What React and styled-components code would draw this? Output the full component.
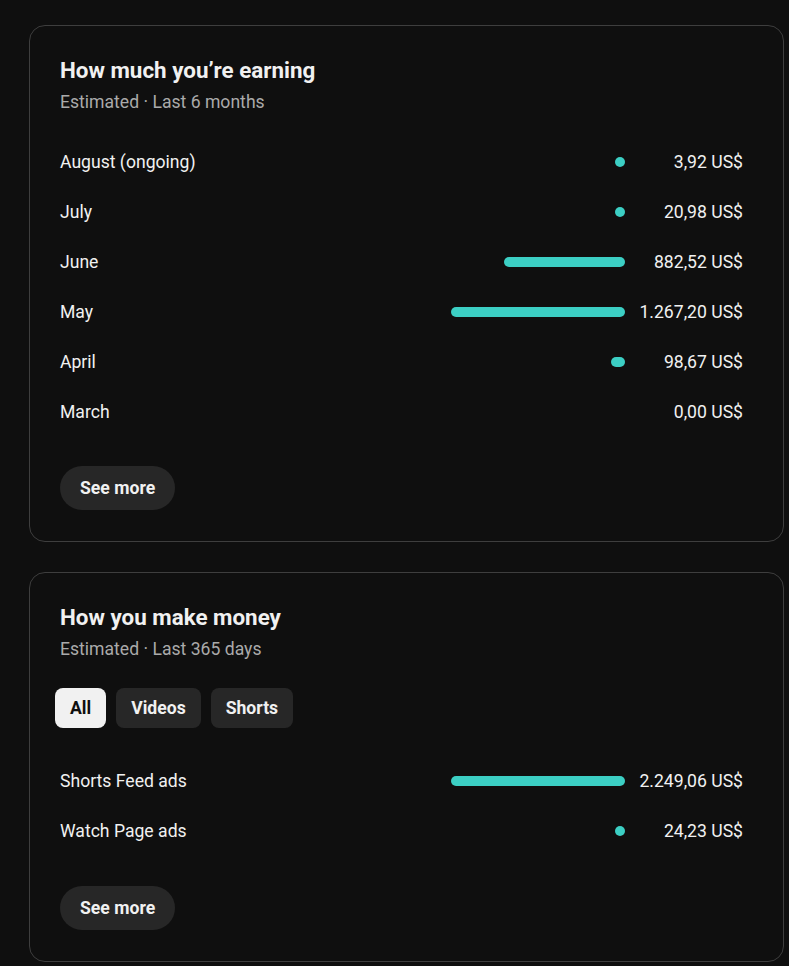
import React from 'react';
import styled, { createGlobalStyle } from 'styled-components';

const GlobalStyle = createGlobalStyle`
  html, body {
    margin: 0;
    padding: 0;
    background: #0f0f0f;
  }
  body {
    font-family: Roboto, "Noto Sans", Arial, sans-serif;
    color: #f1f1f1;
  }
`;

const Page = styled.div`
  display: flex;
  flex-direction: column;
  gap: 30px;
  padding: 25px 5px 4px 29px;
`;

const Card = styled.section`
  border: 1px solid #3e3e3e;
  border-radius: 16px;
  padding: 30px 40px 31px 30px;
  background: #0f0f0f;
`;

const Title = styled.h2`
  margin: 0;
  font-size: 22.4px;
  line-height: 28px;
  font-weight: 700;
  color: #f1f1f1;
`;

const Subtitle = styled.div`
  margin-top: 7px;
  font-size: 17.6px;
  line-height: 22px;
  color: #aaaaaa;
`;

const Rows = styled.div`
  margin-top: ${(p) => p.$top || 24}px;
`;

const Row = styled.div`
  display: flex;
  align-items: center;
  height: 50px;
  font-size: 17.6px;
`;

const Label = styled.span`
  flex: 1;
`;

const BarTrack = styled.div`
  width: 174px;
  display: flex;
  justify-content: flex-end;
`;

const Bar = styled.div`
  height: 10px;
  min-width: 10px;
  border-radius: 5px;
  background: #3ccfc4;
`;

const Value = styled.span`
  width: 118px;
  text-align: right;
`;

const Pill = styled.button`
  display: block;
  margin-top: ${(p) => p.$top || 29}px;
  height: 44px;
  padding: 0 20px;
  border: none;
  border-radius: 22px;
  background: #272727;
  color: #f1f1f1;
  font-family: inherit;
  font-size: 17.6px;
  font-weight: 700;
  cursor: pointer;
`;

const Chips = styled.div`
  display: flex;
  gap: 10px;
  margin: 28px 0 0 -5px;
`;

const Chip = styled.button`
  height: 40px;
  padding: 0 15px;
  border: none;
  border-radius: 8px;
  font-family: inherit;
  font-size: 17.6px;
  font-weight: 700;
  background: ${(p) => (p.$active ? '#f1f1f1' : '#272727')};
  color: ${(p) => (p.$active ? '#0f0f0f' : '#f1f1f1')};
  cursor: pointer;
`;

const monthly = [
  { label: 'August (ongoing)', amount: 3.92 },
  { label: 'July', amount: 20.98 },
  { label: 'June', amount: 882.52 },
  { label: 'May', amount: 1267.2 },
  { label: 'April', amount: 98.67 },
  { label: 'March', amount: 0 },
];

const sources = [
  { label: 'Shorts Feed ads', amount: 2249.06 },
  { label: 'Watch Page ads', amount: 24.23 },
];

const formatUsd = (n) =>
  n.toLocaleString('de-DE', { minimumFractionDigits: 2, maximumFractionDigits: 2 }) + ' US$';

const AmountList = ({ items, top }) => {
  const max = Math.max(...items.map((i) => i.amount));
  return (
    <Rows $top={top}>
      {items.map((item) => (
        <Row key={item.label}>
          <Label>{item.label}</Label>
          <BarTrack>
            {item.amount > 0 && <Bar style={{ width: (item.amount / max) * 174 }} />}
          </BarTrack>
          <Value>{formatUsd(item.amount)}</Value>
        </Row>
      ))}
    </Rows>
  );
};

export default function App() {
  return (
    <>
      <GlobalStyle />
      <Page>
        <Card>
          <Title>How much you’re earning</Title>
          <Subtitle>Estimated · Last 6 months</Subtitle>
          <AmountList items={monthly} />
          <Pill>See more</Pill>
        </Card>
        <Card>
          <Title>How you make money</Title>
          <Subtitle>Estimated · Last 365 days</Subtitle>
          <Chips>
            <Chip $active>All</Chip>
            <Chip>Videos</Chip>
            <Chip>Shorts</Chip>
          </Chips>
          <AmountList items={sources} top={28} />
          <Pill $top={30}>See more</Pill>
        </Card>
      </Page>
    </>
  );
}
